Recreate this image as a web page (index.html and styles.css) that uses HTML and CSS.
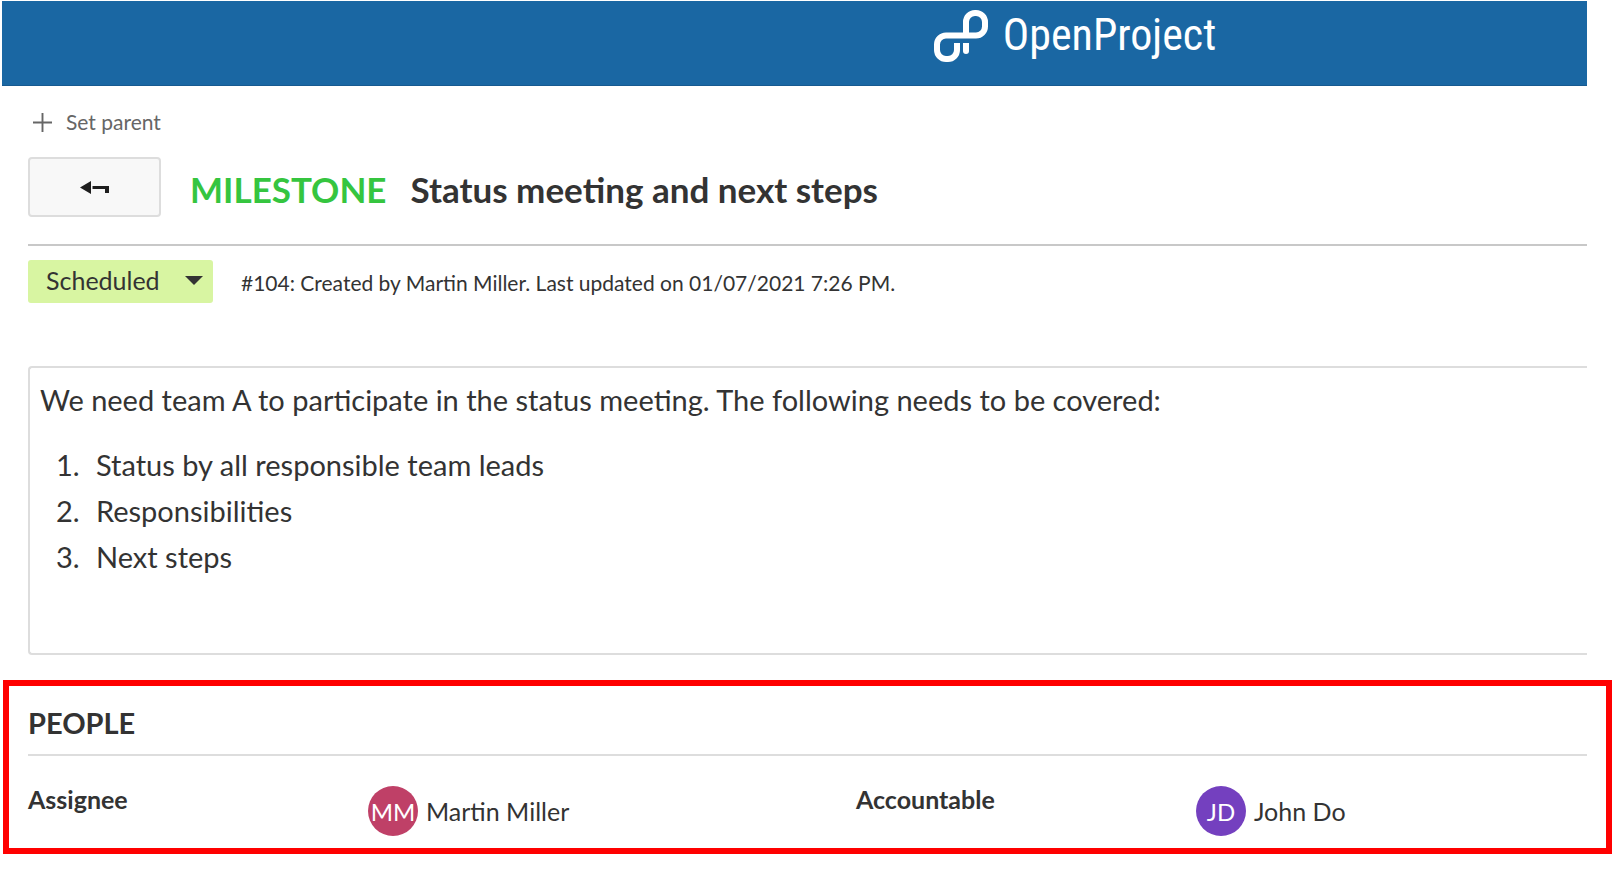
FILE: index.html
```html
<!DOCTYPE html>
<html lang="en">
<head>
<meta charset="utf-8">
<meta name="viewport" content="width=device-width, initial-scale=1">
<title>Status meeting and next steps - OpenProject</title>
<link rel="stylesheet" href="styles.css">
</head>
<body>
<header class="topbar">
  <a class="brand" href="#">
    <svg class="brand-mark" viewBox="0 0 54 52" aria-hidden="true">
      <path d="M32 26V12A9 9 0 0 1 41 3H42A9 9 0 0 1 51 12V16.500A9 9 0 0 1 42 25.500H12A9 9 0 0 0 3 34.500V40A9 9 0 0 0 12 49H14A9 9 0 0 0 23 40V33" fill="none" stroke="#fff" stroke-width="6"/>
      <path d="M29 33h6v8a3 3 0 0 1-6 0z" fill="#fff"/>
    </svg>
    <span class="brand-name">OpenProject</span>
  </a>
</header>
<main class="page">
  <a class="set-parent" href="#">
    <svg class="plus" viewBox="0 0 20 20" aria-hidden="true"><path d="M10 0v20M0 10h20" stroke="#666" stroke-width="2" fill="none"/></svg>
    <span>Set parent</span>
  </a>
  <div class="title-row">
    <button class="back" type="button" aria-label="Back">
      <svg class="back-icon" viewBox="0 0 30 13" aria-hidden="true"><path d="M0 6.500 11 0v13zM12.500 5H29v7h-4V8H12.500z" fill="#1e1e1e"/></svg>
    </button>
    <h1 class="title"><span class="type">MILESTONE</span><span>Status meeting and next steps</span></h1>
  </div>
  <div class="status-row">
    <div class="status">
      <select class="status-select" aria-label="Status"><option>Scheduled</option></select>
      <svg class="caret" viewBox="0 0 18 9" aria-hidden="true"><path d="M0 0h18L9 9z" fill="#333"/></svg>
    </div>
    <p class="meta">#104: Created by Martin Miller. Last updated on 01/07/2021 7:26 PM.</p>
  </div>
  <section class="description">
    <p>We need team A to participate in the status meeting. The following needs to be covered:</p>
    <ol class="topics">
      <li>Status by all responsible team leads</li>
      <li>Responsibilities</li>
      <li>Next steps</li>
    </ol>
  </section>
</main>
<section class="people">
  <h2 class="people-title">PEOPLE</h2>
  <dl class="fields">
    <div class="field">
      <dt>Assignee</dt>
      <dd><span class="avatar avatar-mm">MM</span><span>Martin Miller</span></dd>
    </div>
    <div class="field">
      <dt>Accountable</dt>
      <dd><span class="avatar avatar-jd">JD</span><span>John Do</span></dd>
    </div>
  </dl>
</section>
</body>
</html>
```
FILE: styles.css
```css
* { box-sizing: border-box; }
body {
  margin: 0;
  padding-top: 1px;
  background: #fff;
  color: #333;
  font-family: Lato, sans-serif;
  font-size: 25px;
}
p, h1, h2, dl, dd, ol { margin: 0; padding: 0; }
a { color: inherit; text-decoration: none; }

.topbar {
  display: flex;
  justify-content: center;
  margin: 0 25px 0 2px;
  padding: 9px 0 0 561px;
  height: 85px;
  background: #1a67a3;
  border-bottom: 1px solid #175a90;
}
.brand {
  display: flex;
  gap: 15px;
  height: 54px;
  color: #fff;
}
.brand-mark { width: 54px; height: 52px; }
.brand-name {
  font-family: "Roboto Condensed", Roboto, sans-serif;
  font-size: 44px;
  line-height: 50px;
}

.page { padding: 24px 25px 0 28px; }
.set-parent {
  display: flex;
  align-items: center;
  gap: 14px;
  padding-left: 5px;
  color: #666;
  font-size: 21px;
  line-height: 24px;
}
.plus { width: 19px; height: 19px; }

.title-row {
  display: flex;
  align-items: center;
  gap: 29px;
  padding: 23px 0 27px;
  border-bottom: 2px solid #c8c8c8;
}
.back {
  display: flex;
  align-items: center;
  justify-content: center;
  width: 133px;
  height: 60px;
  padding: 0;
  border: 2px solid #ddd;
  border-radius: 4px;
  background: #f8f8f8;
}
.back-icon { width: 30px; height: 13px; }
.title {
  display: flex;
  gap: 24px;
  padding-top: 4px;
  font-size: 35px;
  line-height: 44px;
  font-weight: 700;
}
.type { color: #35c53f; }

.status-row {
  display: flex;
  align-items: center;
  gap: 28px;
  padding-top: 14px;
}
.status { position: relative; }
.status-select {
  appearance: none;
  display: block;
  width: 185px;
  height: 43px;
  padding: 0 40px 2px 18px;
  border: 0;
  border-radius: 3px;
  background: #d8f5a2;
  color: #333;
  font: inherit;
  line-height: 41px;
}
.caret {
  position: absolute;
  top: 16px;
  right: 10px;
  width: 18px;
  height: 9px;
  pointer-events: none;
}
.meta { padding-top: 3px; font-size: 21px; line-height: 26px; }

.description {
  min-height: 289px;
  margin-top: 63px;
  padding: 9px 10px;
  border: 2px solid #ddd;
  border-right: 0;
  border-radius: 4px 0 0 4px;
  font-size: 29px;
  line-height: 46px;
}
.topics { margin-top: 19px; padding-left: 47px; }
.topics li { padding-left: 9px; }

.people {
  margin: 25px 0 0 3px;
  padding: 18px 19px 12px 19px;
  border: 6px solid #f00;
}
.people-title {
  padding-bottom: 12px;
  border-bottom: 2px solid #ddd;
  font-size: 29px;
  line-height: 38px;
}
.fields {
  display: grid;
  grid-template-columns: 1fr 1fr;
  column-gap: 97px;
  padding-top: 30px;
}
.field { display: flex; }
.field dt {
  flex: 0 0 340px;
  font-weight: 700;
  line-height: 26px;
}
.field dd {
  display: flex;
  align-items: center;
  gap: 8px;
}
.avatar {
  display: flex;
  align-items: center;
  justify-content: center;
  width: 50px;
  height: 50px;
  border-radius: 50%;
  color: #fff;
  font-size: 24px;
}
.avatar-mm { background: #bf4067; }
.avatar-jd { background: #7440bf; }
```
